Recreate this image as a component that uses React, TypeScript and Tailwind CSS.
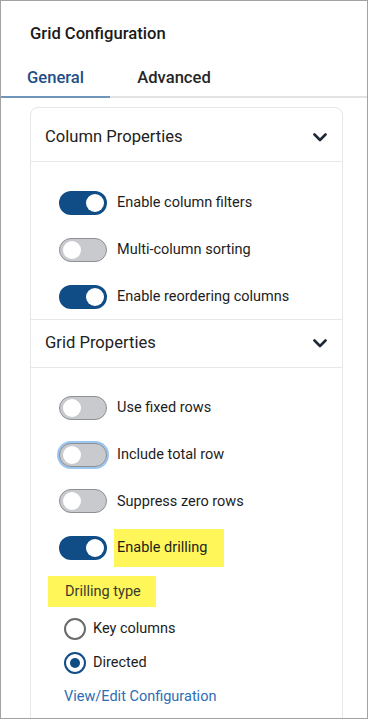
import React from "react";

const Chevron: React.FC = () => (
  <svg width="14" height="9" viewBox="0 0 14 9" fill="none">
    <path d="M1.5 1.5 L7 7 L12.5 1.5" stroke="#1f2937" strokeWidth="2.6" strokeLinecap="round" strokeLinejoin="round" />
  </svg>
);

const Toggle: React.FC<{ on?: boolean; focused?: boolean }> = ({ on, focused }) => {
  if (on) {
    return (
      <div className="w-[48px] h-[24px] rounded-full bg-[#104d87] flex items-center justify-end pr-[3px] shrink-0">
        <div className="w-[18px] h-[18px] rounded-full bg-white" />
      </div>
    );
  }
  return (
    <div
      className={
        focused
          ? "w-[48px] h-[24px] rounded-full bg-[#c8cacd] border border-[#8d9094] ring-2 ring-[#9cc5ef] flex items-center pl-[3px] shrink-0"
          : "w-[48px] h-[24px] rounded-full bg-[#c8cacd] border border-[#8d9094] flex items-center pl-[3px] shrink-0"
      }
    >
      <div className="w-[18px] h-[18px] rounded-full bg-white" />
    </div>
  );
};

const ToggleRow: React.FC<{ label: string; on?: boolean; focused?: boolean }> = ({ label, on, focused }) => (
  <div className="flex items-center h-[24px] gap-[10px]">
    <Toggle on={on} focused={focused} />
    <span className="text-[14.5px] text-[#1d1d1d]">{label}</span>
  </div>
);

const App: React.FC = () => {
  return (
    <div
      className="w-[368px] h-[719px] border border-[#a3a3a3] bg-white overflow-hidden"
      style={{ fontFamily: "Roboto, 'Liberation Sans', sans-serif" }}
    >
      {/* title */}
      <div className="pl-[29px] pt-[21px] text-[16.6px] leading-6 font-medium text-[#1a1a1a]">
        Grid Configuration
      </div>

      {/* tabs */}
      <div className="mt-[10px] flex border-b-2 border-[#e3e3e3]">
        <div className="w-[109px] text-center pt-[10px] pb-[6px] leading-6 text-[16.6px] font-medium text-[#1f4f86] border-b-2 border-[#7095ba] -mb-[2px]">
          General
        </div>
        <div className="w-[128px] text-center pt-[10px] pb-[6px] leading-6 text-[16.6px] font-medium text-[#262626]">
          Advanced
        </div>
      </div>

      {/* card */}
      <div className="ml-[29px] mt-[9px] w-[313px] border border-[#e6e6e6] rounded-lg pb-[60px]">
        <div className="h-[54px] pt-[5px] flex items-center justify-between pl-[14px] pr-[15px] border-b border-[#e8e8e8]">
          <span className="text-[16.6px] text-[#222]">Column Properties</span>
          <Chevron />
        </div>
        <div className="pl-[28px] pt-[29px] pb-[10px] flex flex-col gap-[23px] border-b border-[#e8e8e8]">
          <ToggleRow label="Enable column filters" on />
          <ToggleRow label="Multi-column sorting" />
          <ToggleRow label="Enable reordering columns" on />
        </div>

        <div className="h-[48px] flex items-center justify-between pl-[14px] pr-[15px] border-b border-[#e8e8e8]">
          <span className="text-[16.6px] text-[#222]">Grid Properties</span>
          <Chevron />
        </div>
        <div className="pl-[28px] pt-[28px] flex flex-col gap-[22.7px]">
          <ToggleRow label="Use fixed rows" />
          <ToggleRow label="Include total row" focused />
          <ToggleRow label="Suppress zero rows" />
          <div className="flex items-center h-[24px] gap-[7px]">
            <Toggle on />
            <span className="-my-[7px] h-[38px] w-[110px] pl-[3px] flex items-center bg-[#fff65a] text-[14.5px] text-[#1d1d1d]">
              Enable drilling
            </span>
          </div>
        </div>

        <div className="ml-[17px] mt-[16px] w-[108px] h-[31px] pl-[17px] flex items-center bg-[#fff65a] text-[14.5px] text-[#3b3b2b]">
          Drilling type
        </div>

        <div className="pl-[33px] mt-[10px] flex flex-col gap-[10px]">
          <div className="flex items-center h-[24px] gap-[7px]">
            <div className="w-[22px] h-[22px] rounded-full border-2 border-[#6b6b6b] bg-white" />
            <span className="text-[14.5px] text-[#1d1d1d]">Key columns</span>
          </div>
          <div className="flex items-center h-[24px] gap-[7px]">
            <div className="w-[22px] h-[22px] rounded-full border-[2.5px] border-[#104d87] bg-white flex items-center justify-center">
              <div className="w-[10px] h-[10px] rounded-full bg-[#104d87]" />
            </div>
            <span className="text-[14.5px] text-[#1d1d1d]">Directed</span>
          </div>
        </div>

        <div className="pl-[33px] mt-[12px] text-[14.5px] leading-5 text-[#2d6db3]">
          View/Edit Configuration
        </div>
      </div>
    </div>
  );
};

export default App;
